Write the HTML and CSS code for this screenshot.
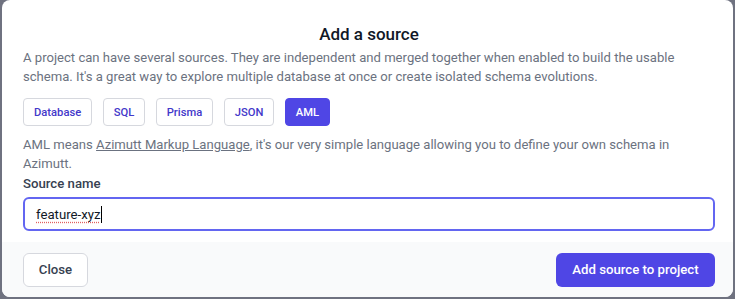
FILE: index.html
```html
<!DOCTYPE html>
<html lang="en">
<head>
  <meta charset="UTF-8" />
  <meta name="viewport" content="width=device-width, initial-scale=1.0"/>
  <title>Add a source</title>
  <link rel="stylesheet" href="styles.css">
</head>
<body>
  <div class="modal">
    <div class="modal-body">
      <h2 class="modal-title">Add a source</h2>
      <p class="modal-text">A project can have several sources. They are independent and merged together when enabled to build the usable schema. It's a great way to explore multiple database at once or create isolated schema evolutions.</p>

      <div class="tabs">
        <button class="tab">Database</button>
        <button class="tab">SQL</button>
        <button class="tab">Prisma</button>
        <button class="tab">JSON</button>
        <button class="tab active">AML</button>
      </div>

      <p class="modal-text tab-desc">AML means <a href="#" class="link">Azimutt Markup Language</a>, it's our very simple language allowing you to define your own schema in Azimutt.</p>

      <label class="form-label" for="source-name">Source name</label>
      <div class="form-input" id="source-name">
        <span class="typed">feature-xyz</span><span class="caret"></span>
      </div>
    </div>

    <div class="modal-footer">
      <button class="btn btn-secondary">Close</button>
      <button class="btn btn-primary">Add source to project</button>
    </div>
  </div>
</body>
</html>
```

FILE: styles.css
```css
* {
  margin: 0;
  padding: 0;
  box-sizing: border-box;
}

body {
  font-family: Roboto, 'Noto Sans', sans-serif;
  background: #6f7280;
  height: 299px;
  overflow: hidden;
}

.modal {
  width: 731px;
  height: 297px;
  margin-left: 2px;
  background: #fff;
  border-radius: 8px;
  overflow: hidden;
  display: flex;
  flex-direction: column;
}

.modal-body {
  flex: 1;
  padding: 22px 18px 0 21px;
}

.modal-title {
  text-align: center;
  color: #111827;
  font-size: 17px;
  font-weight: 500;
  line-height: 24px;
  margin-bottom: 2px;
}

.modal-text {
  color: #6b7280;
  font-size: 13.1px;
  line-height: 19px;
}

.tabs {
  display: flex;
  gap: 10.5px;
  margin-top: 12px;
}

.tab {
  height: 28px;
  padding: 0 10px;
  font-family: inherit;
  font-size: 11.2px;
  font-weight: 500;
  color: #4338ca;
  background: #fff;
  border: 1px solid #d6d8de;
  border-radius: 4px;
}

.tab.active {
  background: #4f46e5;
  border-color: #4f46e5;
  color: #fff;
}

.tab-desc {
  margin-top: 9px;
}

.link {
  color: inherit;
  text-decoration: underline;
}

.form-label {
  display: block;
  margin-top: 1px;
  color: #374151;
  font-size: 13.2px;
  font-weight: 500;
  line-height: 19px;
}

.form-input {
  display: flex;
  align-items: center;
  width: 100%;
  height: 34px;
  margin-top: 4px;
  padding: 0 11px;
  font-size: 13.2px;
  color: #111827;
  border: 2px solid #6366f1;
  border-radius: 6px;
}

.typed {
  text-decoration: underline dotted #e06060;
  text-underline-offset: 3px;
}

.caret {
  width: 1px;
  height: 17px;
  background: #000;
}

.modal-footer {
  height: 55px;
  background: #f9fafb;
  display: flex;
  justify-content: space-between;
  align-items: center;
  padding: 0 18px 0 21px;
}

.btn {
  height: 34px;
  font-family: inherit;
  font-size: 13.2px;
  font-weight: 500;
  border-radius: 6px;
}

.btn-secondary {
  width: 65px;
  background: #fff;
  color: #374151;
  border: 1px solid #d6d8de;
}

.btn-primary {
  width: 159px;
  background: #4f46e5;
  color: #fff;
  border: none;
}
```
